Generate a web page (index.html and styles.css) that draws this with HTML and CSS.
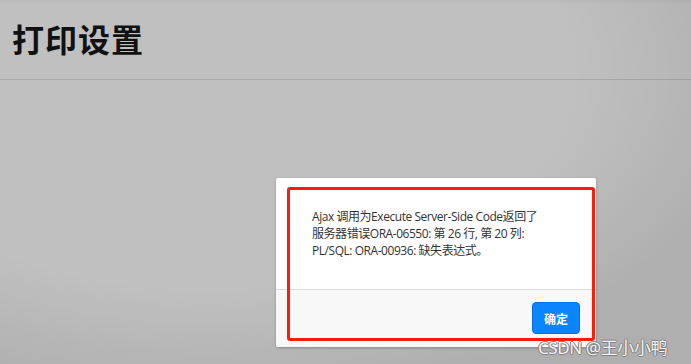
FILE: index.html
```html
<!DOCTYPE html>
<html lang="zh">
<head>
<meta charset="utf-8">
<title>打印设置</title>
<link rel="stylesheet" href="styles.css">
</head>
<body>
<div class="page">
  <header class="page-header">
    <h1 class="page-title">打印设置</h1>
  </header>
  <div class="vignette"></div>
  <div class="dialog">
    <div class="dialog-body">
      <p class="dialog-msg">Ajax 调用为Execute Server-Side Code返回了<br>服务器错误ORA-06550: 第 26 行, 第 20 列:<br>PL/SQL: ORA-00936: 缺失表达式。</p>
    </div>
    <div class="dialog-footer">
      <button class="btn-ok">确定</button>
    </div>
  </div>
  <div class="annot-box"></div>
  <div class="watermark">CSDN @王小小鸭</div>
</div>
</body>
</html>
```
FILE: styles.css
```css
html, body {
  margin: 0;
  padding: 0;
}
body {
  width: 691px;
  height: 364px;
  overflow: hidden;
  background: #c0c0c0;
  font-family: "Open Sans", "Noto Sans CJK SC", sans-serif;
}
.page {
  position: relative;
  width: 691px;
  height: 364px;
  background: linear-gradient(to bottom, #b9b9b9 0, #c0c0c0 4px);
}
.page-header {
  height: 80px;
  border-bottom: 1px solid #aaaaaa;
  box-sizing: border-box;
  display: flex;
  align-items: center;
  padding-left: 12px;
}
.page-title {
  margin: 0 0 3px 0;
  font-family: "Noto Sans CJK SC", sans-serif;
  font-size: 32px;
  font-weight: 700;
  color: #111;
  letter-spacing: 1px;
}
.vignette {
  position: absolute;
  inset: 0;
  background: radial-gradient(ellipse 560px 330px at 30% 20%, rgba(0,0,0,0) 65%, rgba(0,0,0,0.09) 100%);
  pointer-events: none;
}
.dialog {
  position: absolute;
  left: 276px;
  top: 178px;
  width: 320px;
  height: 169px;
  background: #fff;
  border-radius: 2px;
  box-shadow: 0 1px 3px rgba(0,0,0,0.25);
  display: flex;
  flex-direction: column;
  overflow: hidden;
}
.dialog-body {
  height: 112px;
  box-sizing: border-box;
  padding: 30px 20px 0 36px;
  border-bottom: 1px solid #dcdcdc;
}
.dialog-msg {
  margin: 0;
  font-size: 12px;
  line-height: 17px;
  color: #333;
  white-space: nowrap;
  letter-spacing: -0.45px;
}
.dialog-footer {
  flex: 1;
  background: #f8f8f8;
  display: flex;
  justify-content: flex-end;
  align-items: flex-start;
  padding: 12px 16px 0 0;
}
.btn-ok {
  width: 48px;
  height: 32px;
  border: 1px solid #0670de;
  border-radius: 4px;
  background: #0a84ff;
  color: #fff;
  font-family: "Noto Sans CJK SC", sans-serif;
  font-size: 12px;
  font-weight: 700;
  padding: 0;
}
.annot-box {
  position: absolute;
  left: 287px;
  top: 187px;
  width: 302px;
  height: 148px;
  border: 3px solid #ff1a0e;
  border-radius: 3px;
}
.watermark {
  position: absolute;
  left: 538px;
  top: 334px;
  font-family: "Noto Sans", "Noto Sans CJK SC", sans-serif;
  font-size: 17px;
  color: #f4f4f4;
  letter-spacing: -0.4px;
  text-shadow: 1px 0 0 #808080, -1px 0 0 #808080, 0 1px 0 #808080, 0 -1px 0 #808080;
}
```
